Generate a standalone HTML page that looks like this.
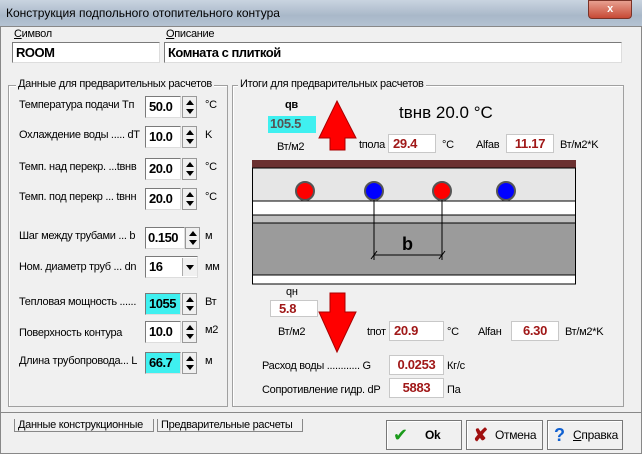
<!DOCTYPE html>
<html><head><meta charset="utf-8"><style>
*{margin:0;padding:0;box-sizing:border-box}
body{width:642px;height:454px;overflow:hidden;font-family:"Liberation Sans",sans-serif;font-size:11px;letter-spacing:-0.3px;background:#f0f0f0;position:relative}
.a{position:absolute;white-space:nowrap}
.title{left:0;top:0;width:642px;height:26px;background:linear-gradient(#c9d4e0,#a9b8c9 60%,#b4c2d2);}
.frame{position:absolute;border:1px solid #a0a0a0;box-shadow:inset 1px 1px 0 #fff}
.inp{position:absolute;background:#fff;border:1px solid #7a7a7a;border-right-color:#ddd;border-bottom-color:#ddd;font-weight:bold;font-size:13px;letter-spacing:-0.5px;padding-left:3px;line-height:19px}
.spin{position:absolute;width:15px;background:#f0f0f0;border:1px solid #999}
.spin:before{content:"";position:absolute;left:3px;top:3px;border:4px solid transparent;border-bottom:5px solid #000;border-top:0}
.spin:after{content:"";position:absolute;left:3px;bottom:3px;border:4px solid transparent;border-top:5px solid #000;border-bottom:0}
.out{position:absolute;background:#fff;border:1px solid #c8c8c8;color:#a01818;font-weight:bold;font-size:13px;text-align:center;line-height:18px}
.lbl{position:absolute;font-size:11px;white-space:nowrap}
.btn{position:absolute;top:420px;height:30px;border:1px solid #777;background:#f0f0f0;box-shadow:inset 1px 1px 0 #fff;font-size:12px;line-height:28px}
</style></head><body>
<div class="a title"></div>
<div class="a" style="left:6px;top:6px;font-size:12px;letter-spacing:0">Конструкция подпольного отопительного контура</div>
<div class="a" style="left:588px;top:0;width:44px;height:19px;background:linear-gradient(#e8a090,#c74a36);border:1px solid #7a3328;border-radius:0 0 4px 4px;color:#fff;font-weight:bold;text-align:center;line-height:17px">x</div>
<div class="a" style="left:0;top:26px;width:642px;height:428px;background:#f0f0f0;border:1px solid #888"></div>
<div class="lbl" style="left:14px;top:28px"><u>С</u>имвол</div>
<div class="lbl" style="left:166px;top:28px"><u>О</u>писание</div>
<div class="inp" style="left:12px;top:42px;width:148px;height:21px">ROOM</div>
<div class="inp" style="left:164px;top:42px;width:458px;height:21px">Комната с плиткой</div>

<div class="frame" style="left:8px;top:85px;width:220px;height:322px"></div>
<div class="lbl" style="left:16px;top:78px;background:#f0f0f0;padding:0 2px">Данные для предварительных расчетов</div>
<div class="frame" style="left:232px;top:85px;width:392px;height:322px"></div>
<div class="lbl" style="left:238px;top:78px;background:#f0f0f0;padding:0 2px">Итоги для предварительных расчетов</div>

<div class="lbl" style="left:19px;top:99px">Температура подачи  Tп</div>
<div class="inp" style="left:145px;top:96px;width:36px;height:22px">50.0</div><div class="spin" style="left:182px;top:96px;height:22px"></div><div class="lbl" style="left:205px;top:99px">°C</div>
<div class="lbl" style="left:19px;top:129px">Охлаждение воды ..... dT</div>
<div class="inp" style="left:145px;top:126px;width:36px;height:22px">10.0</div><div class="spin" style="left:182px;top:126px;height:22px"></div><div class="lbl" style="left:205px;top:129px">K</div>
<div class="lbl" style="left:19px;top:161px">Темп. над перекр. ...tвнв</div>
<div class="inp" style="left:145px;top:158px;width:36px;height:22px">20.0</div><div class="spin" style="left:182px;top:158px;height:22px"></div><div class="lbl" style="left:205px;top:161px">°C</div>
<div class="lbl" style="left:19px;top:191px">Темп. под перекр ... tвнн</div>
<div class="inp" style="left:145px;top:188px;width:36px;height:22px">20.0</div><div class="spin" style="left:182px;top:188px;height:22px"></div><div class="lbl" style="left:205px;top:191px">°C</div>
<div class="lbl" style="left:19px;top:230px">Шаг между трубами ... b</div>
<div class="inp" style="left:145px;top:227px;width:40px;height:22px;padding-left:2px">0.150</div><div class="spin" style="left:185px;top:227px;height:22px"></div><div class="lbl" style="left:205px;top:230px">м</div>
<div class="lbl" style="left:19px;top:261px">Ном. диаметр труб ... dn</div>
<div class="inp" style="left:145px;top:256px;width:53px;height:22px">16</div>
<div class="a" style="left:182px;top:258px;width:15px;height:18px;background:#f0f0f0;border-left:1px solid #aaa"><div style="margin:7px 0 0 3px;border:4px solid transparent;border-top:5px solid #000;width:0"></div></div>
<div class="lbl" style="left:205px;top:261px">мм</div>
<div class="lbl" style="left:19px;top:296px">Тепловая мощность ......</div>
<div class="inp" style="left:145px;top:293px;width:36px;height:22px;background:#3ff0f0">1055</div><div class="spin" style="left:182px;top:293px;height:22px"></div><div class="lbl" style="left:205px;top:296px">Вт</div>
<div class="lbl" style="left:19px;top:327px">Поверхность контура</div>
<div class="inp" style="left:145px;top:321px;width:36px;height:22px">10.0</div><div class="spin" style="left:182px;top:321px;height:22px"></div><div class="lbl" style="left:205px;top:324px">м2</div>
<div class="lbl" style="left:19px;top:355px">Длина трубопровода... L</div>
<div class="inp" style="left:145px;top:352px;width:36px;height:22px;background:#3ff0f0">66.7</div><div class="spin" style="left:182px;top:352px;height:22px"></div><div class="lbl" style="left:205px;top:355px">м</div>

<div class="lbl" style="left:285px;top:99px;font-weight:bold;font-size:11px">qв</div>
<div class="a" style="left:268px;top:116px;width:48px;height:17px;background:#3ff0f0;color:#555;font-weight:bold;font-size:13px;padding-left:2px">105.5</div>
<div class="lbl" style="left:277px;top:141px">Вт/м2</div>
<svg class="a" style="left:318px;top:100px" width="40" height="52"><polygon points="19,1 38,38 27,38 27,50 12,50 12,38 1,38" fill="#f00" stroke="#a00"/></svg>
<div class="lbl" style="left:399px;top:103px;font-size:17px;letter-spacing:0">tвнв  20.0 °C</div>
<div class="lbl" style="left:359px;top:139px">tпола</div>
<div class="out" style="left:388px;top:134px;width:48px;height:19px;text-align:left;padding-left:4px">29.4</div>
<div class="lbl" style="left:442px;top:139px">°C</div>
<div class="lbl" style="left:476px;top:139px">Alfaв</div>
<div class="out" style="left:506px;top:134px;width:48px;height:19px">11.17</div>
<div class="lbl" style="left:560px;top:139px">Вт/м2*K</div>

<svg class="a" style="left:252px;top:160px" width="326" height="125">
<rect x="0" y="0" width="324" height="8" fill="#6b3030"/>
<rect x="0.5" y="8" width="323" height="33" fill="#e6e6e6" stroke="#000" stroke-width="1"/>
<rect x="0.5" y="41" width="323" height="14" fill="#fff" stroke="#000"/>
<rect x="0.5" y="55" width="323" height="8" fill="#c0c0c0" stroke="#000"/>
<rect x="0.5" y="63" width="323" height="52" fill="#9b9b9b" stroke="#000"/>
<rect x="0.5" y="115" width="323" height="9" fill="#fff" stroke="#000"/>
<g stroke="#555" stroke-width="2"><circle cx="53" cy="31" r="9" fill="#f00"/><circle cx="122" cy="31" r="9" fill="#00f"/><circle cx="190" cy="31" r="9" fill="#f00"/><circle cx="254" cy="31" r="9" fill="#00f"/></g>
<g stroke="#000"><line x1="122" y1="40" x2="122" y2="100"/><line x1="190" y1="40" x2="190" y2="100"/><line x1="122" y1="95" x2="190" y2="95"/><line x1="119" y1="99" x2="125" y2="91"/><line x1="187" y1="99" x2="193" y2="91"/></g>
<text x="150" y="90" font-family="Liberation Sans" font-size="18" font-weight="bold">b</text>
</svg>

<div class="lbl" style="left:286px;top:286px;font-size:11px">qн</div>
<div class="out" style="left:270px;top:300px;width:48px;height:17px;text-align:left;padding-left:8px;line-height:16px">5.8</div>
<div class="lbl" style="left:278px;top:326px">Вт/м2</div>
<svg class="a" style="left:318px;top:292px" width="40" height="62"><polygon points="12,1 27,1 27,20 38,20 19,60 1,20 12,20" fill="#f00" stroke="#a00"/></svg>
<div class="lbl" style="left:367px;top:326px">tпот</div>
<div class="out" style="left:389px;top:321px;width:55px;height:20px;text-align:left;padding-left:4px">20.9</div>
<div class="lbl" style="left:447px;top:326px">°C</div>
<div class="lbl" style="left:478px;top:326px">Alfaн</div>
<div class="out" style="left:511px;top:321px;width:48px;height:20px">6.30</div>
<div class="lbl" style="left:565px;top:326px">Вт/м2*K</div>
<div class="lbl" style="left:262px;top:360px">Расход воды ............ G</div>
<div class="out" style="left:389px;top:355px;width:55px;height:20px">0.0253</div>
<div class="lbl" style="left:447px;top:360px">Кг/с</div>
<div class="lbl" style="left:262px;top:384px">Сопротивление гидр. dP</div>
<div class="out" style="left:389px;top:378px;width:55px;height:20px">5883</div>
<div class="lbl" style="left:447px;top:384px">Па</div>

<div class="a" style="left:0;top:412px;width:642px;border-top:1px solid #888"></div>
<div class="lbl" style="left:14px;top:419px;width:140px;border:1px solid #888;border-top:0;padding:0 3px;background:#f0f0f0">Данные конструкционные</div>
<div class="lbl" style="left:157px;top:419px;width:146px;border:1px solid #888;border-top:0;padding:0 3px">Предварительные расчеты</div>
<div class="btn" style="left:386px;width:76px"><span style="color:#1a9a1a;font-size:18px;position:absolute;left:6px;top:0">✔</span><b style="position:absolute;left:38px">Ok</b></div>
<div class="btn" style="left:466px;width:77px"><span style="color:#a01010;font-size:18px;font-weight:bold;position:absolute;left:6px;top:0">✘</span><span style="position:absolute;left:28px">Отмена</span></div>
<div class="btn" style="left:547px;width:76px"><span style="color:#1060d0;font-size:18px;font-weight:bold;position:absolute;left:6px;top:0">?</span><span style="position:absolute;left:25px"><u>С</u>правка</span></div>
</body></html>
